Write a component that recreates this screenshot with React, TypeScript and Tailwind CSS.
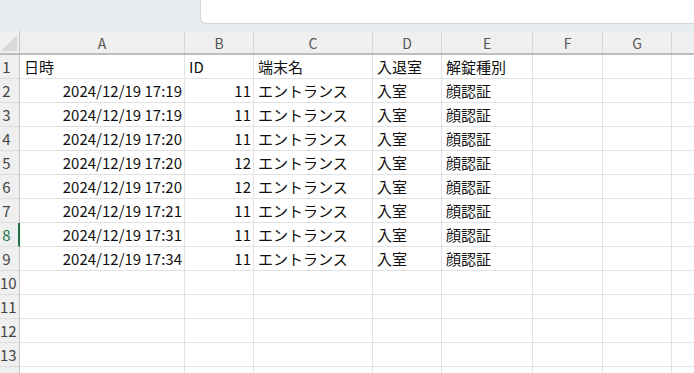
import React from "react";

const COLS = [
  { key: "A", w: 165 },
  { key: "B", w: 69 },
  { key: "C", w: 119 },
  { key: "D", w: 69 },
  { key: "E", w: 91 },
  { key: "F", w: 70 },
  { key: "G", w: 69 },
  { key: "", w: 40 },
];

type Row = [string, string, string, string, string];

const DATA: Row[] = [
  ["2024/12/19 17:19", "11", "エントランス", "入室", "顔認証"],
  ["2024/12/19 17:19", "11", "エントランス", "入室", "顔認証"],
  ["2024/12/19 17:20", "11", "エントランス", "入室", "顔認証"],
  ["2024/12/19 17:20", "12", "エントランス", "入室", "顔認証"],
  ["2024/12/19 17:20", "12", "エントランス", "入室", "顔認証"],
  ["2024/12/19 17:21", "11", "エントランス", "入室", "顔認証"],
  ["2024/12/19 17:31", "11", "エントランス", "入室", "顔認証"],
  ["2024/12/19 17:34", "11", "エントランス", "入室", "顔認証"],
];

const HEAD = ["日時", "ID", "端末名", "入退室", "解錠種別"];

function RowHeader({ n, selected }: { n?: number; selected?: boolean }) {
  return (
    <div
      className={
        "flex h-full w-[20px] shrink-0 items-end border-b border-[#dcdcdc] bg-[#efefef] pb-[2px] " +
        (selected ? "border-r-2 border-r-[#217346] text-[#217346]" : "border-r border-r-[#c4c4c4] text-[#444]")
      }
    >
      <span className="w-[13px] text-center text-[15px] leading-[19px]">{n}</span>
    </div>
  );
}

function Cell({ w, text, right }: { w: number; text?: string; right?: boolean }) {
  return (
    <div
      className={
        "flex h-full shrink-0 items-end overflow-visible whitespace-nowrap border-r border-b border-[#e1e1e1] pb-[2px] text-[15px] leading-[19px] text-[#111] " +
        (right ? "justify-end pr-[2px]" : "pl-[4px]")
      }
      style={{ width: w }}
    >
      {text}
    </div>
  );
}

export default function App() {
  const rows: (string[] | null)[] = [HEAD, ...DATA, null, null, null, null, null];
  return (
    <div
      className="h-[373px] w-[694px] overflow-hidden bg-white"
      style={{ fontFamily: '"Noto Sans CJK JP", "Noto Sans", sans-serif' }}
    >
      {/* top bar */}
      <div className="flex h-[31px] bg-[#e8ebef]">
        <div className="w-[200px] shrink-0" />
        <div className="h-[24px] flex-1 rounded-bl-[6px] border-b border-l border-[#d3d6da] bg-white" />
      </div>

      {/* column header */}
      <div className="flex h-[24px] border-b-2 border-[#bdbdbd] bg-[#efefef]">
        <div className="flex w-[20px] shrink-0 items-end justify-end border-r border-[#c4c4c4] pb-[2px] pr-[2px]">
          <svg width="16" height="16" viewBox="0 0 16 16">
            <polygon points="16,0 16,16 0,16" fill="#d9d9d9" />
          </svg>
        </div>
        {COLS.map((c, i) => (
          <div
            key={i}
            className="flex shrink-0 items-center justify-center border-r border-[#d6d6d6] pt-[2px] text-[14px] text-[#555]"
            style={{ width: c.w }}
          >
            {c.key}
          </div>
        ))}
      </div>

      {/* body */}
      {rows.map((r, ri) => (
        <div key={ri} className="flex h-[24px]">
          <RowHeader n={ri < 13 ? ri + 1 : undefined} selected={ri === 7} />
          {COLS.map((c, ci) => (
            <Cell
              key={ci}
              w={c.w}
              text={r && ci < 5 ? r[ci] : undefined}
              right={ri > 0 && (ci === 0 || ci === 1)}
            />
          ))}
        </div>
      ))}
    </div>
  );
}
